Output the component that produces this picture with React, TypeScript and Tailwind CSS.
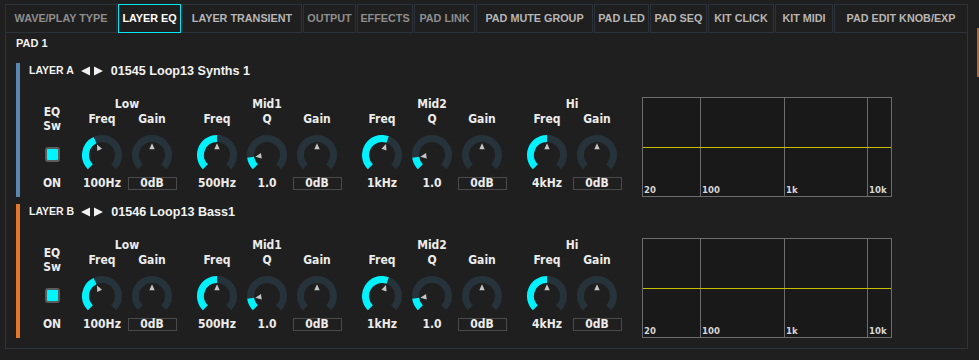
import React from 'react';

type Col = { label: string; angle: number; value: string; box?: boolean; bipolar?: boolean };
type Group = { label: string; cols: Col[] };

const tabs = [
  { label: 'WAVE/PLAY TYPE', w: 'w-[112px]', tone: 'dim' },
  { label: 'LAYER EQ', w: 'w-[63px]', tone: 'active' },
  { label: 'LAYER TRANSIENT', w: 'w-[120px]', tone: 'mid' },
  { label: 'OUTPUT', w: 'w-[53px]', tone: 'dim' },
  { label: 'EFFECTS', w: 'w-[56px]', tone: 'dim' },
  { label: 'PAD LINK', w: 'w-[61px]', tone: 'dim' },
  { label: 'PAD MUTE GROUP', w: 'w-[117px]', tone: 'mid' },
  { label: 'PAD LED', w: 'w-[55px]', tone: 'mid' },
  { label: 'PAD SEQ', w: 'w-[57px]', tone: 'mid' },
  { label: 'KIT CLICK', w: 'w-[66px]', tone: 'mid' },
  { label: 'KIT MIDI', w: 'w-[58px]', tone: 'mid' },
  { label: 'PAD EDIT KNOB/EXP', w: 'w-[134px]', tone: 'mid' },
];

const gain: Col = { label: 'Gain', angle: 0, value: '0dB', box: true, bipolar: true };

const groups: Group[] = [
  { label: 'Low', cols: [{ label: 'Freq', angle: -25, value: '100Hz' }, gain] },
  {
    label: 'Mid1',
    cols: [{ label: 'Freq', angle: 0, value: '500Hz' }, { label: 'Q', angle: -98, value: '1.0' }, gain],
  },
  {
    label: 'Mid2',
    cols: [{ label: 'Freq', angle: 20, value: '1kHz' }, { label: 'Q', angle: -98, value: '1.0' }, gain],
  },
  { label: 'Hi', cols: [{ label: 'Freq', angle: 0, value: '4kHz' }, gain] },
];

const layers = [
  { name: 'LAYER A', patch: '01545 Loop13 Synths 1', bar: 'bg-[#5a86b2]' },
  { name: 'LAYER B', patch: '01546 Loop13 Bass1', bar: 'bg-[#e3772b]' },
];

const cond = "font-[family-name:'DejaVu_Sans_Condensed','DejaVu_Sans',sans-serif] [font-stretch:condensed] font-bold";
const sans = "font-[family-name:'Liberation_Sans',Arial,sans-serif] font-bold";

const R = 16.5;
function pt(a: number) {
  const r = (a * Math.PI) / 180;
  return `${(20 + R * Math.sin(r)).toFixed(2)} ${(20 - R * Math.cos(r)).toFixed(2)}`;
}
function arc(a0: number, a1: number) {
  const large = a1 - a0 > 180 ? 1 : 0;
  return `M ${pt(a0)} A ${R} ${R} 0 ${large} 1 ${pt(a1)}`;
}

function Knob({ angle, bipolar }: { angle: number; bipolar?: boolean }) {
  return (
    <svg width="40" height="40" viewBox="0 0 40 40">
      <path d={arc(-135, 135)} fill="none" stroke="#27333b" strokeWidth="7" />
      {!bipolar && <path d={arc(-135, angle)} fill="none" stroke="#00f2ff" strokeWidth="7" />}
      <polygon points="20,8.3 17.3,14.3 22.7,14.3" fill="#c6c6c6" transform={`rotate(${angle} 20 20)`} />
    </svg>
  );
}

const segs = [
  { label: '20', cls: 'w-[58px] border-r' },
  { label: '100', cls: 'w-[84px] border-r' },
  { label: '1k', cls: 'w-[83px] border-r' },
  { label: '10k', cls: 'flex-1' },
];

function Graph() {
  return (
    <div className="ml-[20px] flex h-[100px] w-[250px] flex-col border border-[#6d6d6d] bg-[#191919]">
      <div className="flex h-[49px]">
        {segs.map((s) => (
          <div key={s.label} className={`${s.cls} border-[#6d6d6d]`} />
        ))}
      </div>
      <div className="h-px bg-[#c4c000]" />
      <div className="flex flex-1">
        {segs.map((s) => (
          <div key={s.label} className={`${s.cls} flex flex-col justify-end border-[#6d6d6d] pb-[1px] pl-[1px]`}>
            <span className={`${cond} text-[9.5px] leading-[11px] text-[#d6d6d6]`}>{s.label}</span>
          </div>
        ))}
      </div>
    </div>
  );
}

function Layer({ name, patch, bar }: { name: string; patch: string; bar: string }) {
  return (
    <div className="flex h-[134px]">
      <div className={`w-[4px] ${bar}`} />
      <div className="flex flex-col">
        <div className="flex h-[16px] items-center pl-[9px] text-[#f2f2f2]">
          <span className={`${sans} text-[10.5px]`}>{name}</span>
          <svg width="22" height="10" viewBox="0 0 22 10" className="ml-[7px]">
            <polygon points="0,5 9,0.5 9,9.5" fill="#f2f2f2" />
            <polygon points="22,5 13,0.5 13,9.5" fill="#f2f2f2" />
          </svg>
          <span className={`${sans} ml-[8px] text-[12.6px]`}>{patch}</span>
        </div>
        <div className="ml-[7px] mt-[18px] flex items-start text-[#ececec]">
          <div className={`${cond} flex w-[50px] flex-col items-center text-[12px]`}>
            <div className="pt-[8px] leading-[14px]">EQ</div>
            <div className="leading-[14px]">Sw</div>
            <div className="mt-[14px] h-[15px] w-[15px] rounded-[3px] border-2 border-[#5c5c5c] bg-[#00f6ff]" />
            <div className="mt-[15px] h-[13px] leading-[13px]">ON</div>
          </div>
          {groups.map((g, gi) => (
            <div key={gi} className={`flex flex-col ${gi > 0 ? 'ml-[15px]' : ''}`}>
              <div className={`${cond} h-[14px] text-center text-[12px] leading-[14px]`}>{g.label}</div>
              <div className="flex">
                {g.cols.map((c, ci) => (
                  <div key={ci} className={`${cond} flex w-[50px] flex-col items-center text-[12px]`}>
                    <div className="h-[14px] pt-px leading-[14px]">{c.label}</div>
                    <div className="mt-[10px]">
                      <Knob angle={c.angle} bipolar={c.bipolar} />
                    </div>
                    <div
                      className={`mt-[2px] flex h-[13px] items-center justify-center leading-[13px] ${
                        c.box ? 'w-[49px] border border-[#4a4a4a]' : 'w-[50px]'
                      }`}
                    >
                      {c.value}
                    </div>
                  </div>
                ))}
              </div>
            </div>
          ))}
          <Graph />
        </div>
      </div>
    </div>
  );
}

export default function App() {
  return (
    <div className="relative h-[360px] w-[979px] overflow-hidden bg-[#1f1f1f] pt-[4px]">
      {/* Tabs */}
      <div className="ml-[5px] flex gap-px">
        {tabs.map((t) => (
          <div
            key={t.label}
            className={`${t.w} ${sans} flex h-[29px] items-center justify-center border text-[10.8px] ${
              t.tone === 'active'
                ? 'border-[#00e8f5] text-white'
                : t.tone === 'dim'
                ? 'border-[#2b323a] text-[#8e8e8e]'
                : 'border-[#2b323a] text-[#b6b6b6]'
            }`}
          >
            {t.label}
          </div>
        ))}
      </div>

      {/* Panel */}
      <div className="ml-[5px] h-[316px] w-[963px] border border-t-0 border-[#2d343c] pl-[10px] pt-[3px]">
        <div className={`${sans} h-[14px] text-[11px] leading-[14px] text-[#f2f2f2]`}>PAD 1</div>
        <div className="mt-[13px]">
          <Layer {...layers[0]} />
        </div>
        <div className="mt-[7px]">
          <Layer {...layers[1]} />
        </div>
      </div>

      {/* scrollbar edge */}
      <div className="absolute right-0 top-[28px] h-[49px] w-[2px] bg-[#b8642c]" />
    </div>
  );
}
